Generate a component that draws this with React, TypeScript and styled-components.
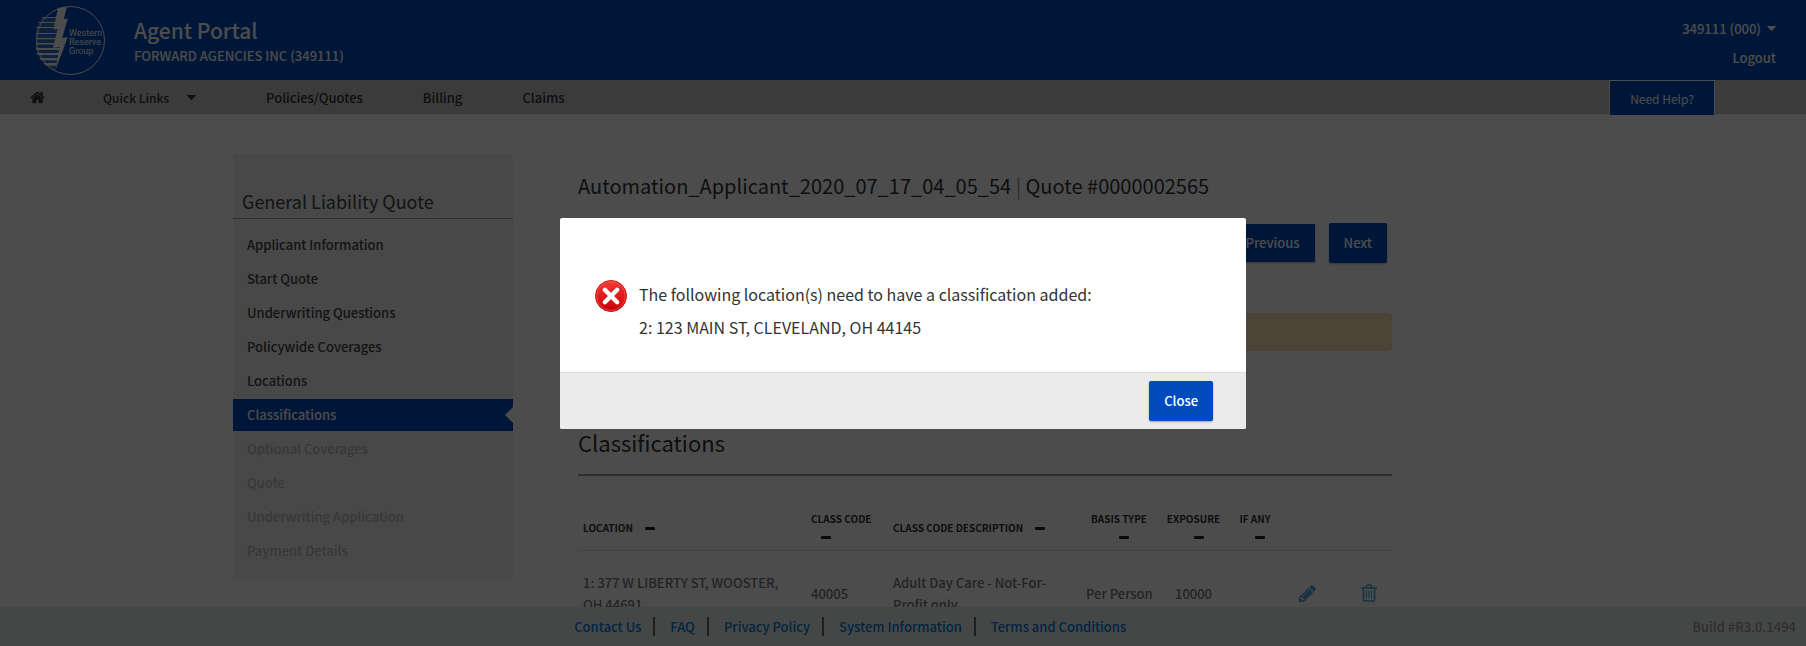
import React from "react";
import styled, { createGlobalStyle } from "styled-components";

const color = {
  brand: "#004bbc",
  text: "#333",
  menu: "#444",
  muted: "#777",
  disabled: "#bbb",
  link: "#0078dc",
  action: "#56a8e0",
};

const GlobalStyle = createGlobalStyle`
  * { box-sizing: border-box; }
  body {
    margin: 0;
    background: #fff;
    color: ${color.text};
    font-family: "Noto Sans CJK SC", "Open Sans", sans-serif;
    font-size: 13px;
    font-weight: 500;
  }
  a { color: inherit; text-decoration: none; }
  button { font: inherit; cursor: pointer; }
  h1, h2, p, ul { margin: 0; padding: 0; }
  ul { list-style: none; }
`;

const Page = styled.div`
  display: flex;
  flex-direction: column;
  height: 100vh;
  overflow: hidden;
`;

/* Header */
const Header = styled.header`
  flex: none;
  display: flex;
  align-items: center;
  height: 80px;
  padding: 0 30px 0 36px;
  background: ${color.brand};
  color: #fff;
`;
const LogoMark = styled.svg`
  display: block;
  width: 69px;
  height: 69px;
  margin-right: 29px;
`;
const Brand = styled.div`
  flex: 1;
  padding-top: 5px;
`;
const BrandName = styled.p`
  font-size: 21px;
  line-height: 26px;
`;
const Agency = styled.p`
  line-height: 25px;
`;
const Account = styled.div`
  display: flex;
  flex-direction: column;
  align-items: flex-end;
  line-height: 29px;
  padding-top: 6px;
`;
const AccountButton = styled.button`
  display: flex;
  align-items: center;
  gap: 6px;
  padding: 0;
  border: 0;
  background: none;
  color: inherit;
  line-height: 29px;
`;

/* Navigation bar */
const NavBar = styled.nav`
  flex: none;
  display: flex;
  align-items: center;
  height: 34px;
  padding-right: 91px;
  background: #c6c6c6;
  color: ${color.text};
`;
const NavLink = styled.a`
  display: flex;
  align-items: center;
  padding: 0 30px;
`;
const HomeLink = styled(NavLink)`
  padding-right: 28px;
`;
const NavMenu = styled.button`
  display: flex;
  align-items: center;
  gap: 18px;
  padding: 0 40px 0 30px;
  border: 0;
  background: none;
  color: inherit;
  font-size: 12px;
`;
const HelpButton = styled.button`
  position: relative;
  align-self: flex-start;
  flex: none;
  height: 36px;
  margin-left: auto;
  padding: 0 20px;
  border: 1px solid #fff;
  background: ${color.brand};
  color: #fff;
  font-size: 12px;
  font-weight: 400;
`;

/* Body */
const Body = styled.div`
  flex: 1;
  min-height: 0;
  overflow: hidden;
  padding: 40px 20px 0;
`;
const Columns = styled.div`
  display: grid;
  grid-template-columns: 280px minmax(0, 814px);
  gap: 65px;
  align-items: start;
  max-width: 1340px;
  margin: 0 auto;
`;
const Sidebar = styled.aside`
  padding: 33px 0 12px;
  background: #f0f0f0;
  color: ${color.menu};
`;
const SidebarTitle = styled.h2`
  margin-bottom: 10px;
  padding: 0 9px 3px;
  border-bottom: 1px solid #999;
  font-size: 18px;
  font-weight: 400;
  line-height: 28px;
`;
const Step = styled.li`
  & + & { margin-top: 2px; }
`;
const StepLink = styled.a<{ $state?: "active" | "disabled" }>`
  position: relative;
  display: block;
  padding: 0 14px;
  line-height: 32px;
  background: ${(p) => (p.$state === "active" ? color.brand : "transparent")};
  color: ${(p) =>
    p.$state === "active" ? "#fff" : p.$state === "disabled" ? color.disabled : "inherit"};

  &::after {
    content: "";
    display: ${(p) => (p.$state === "active" ? "block" : "none")};
    position: absolute;
    top: 8px;
    right: 0;
    border: 8px solid transparent;
    border-left: 0;
    border-right-color: #fff;
  }
`;

const Main = styled.main`
  padding-top: 17px;
`;
const QuoteTitle = styled.h1`
  font-size: 20px;
  font-weight: 400;
  line-height: 30px;
`;
const Divider = styled.span`
  color: #999;
`;
const Actions = styled.div`
  display: flex;
  justify-content: flex-end;
  align-items: center;
  gap: 14px;
  margin-top: 22px;
  padding-right: 5px;
`;
const Button = styled.button<{ $flat?: boolean }>`
  height: ${(p) => (p.$flat ? 38 : 40)}px;
  padding: 0 15px 2px;
  border: 0;
  border-radius: ${(p) => (p.$flat ? 0 : 2)}px;
  background: ${color.brand};
  color: #fff;
  font-weight: 500;
  box-shadow: 0 1px 2px rgba(0, 0, 0, 0.3);
`;
const Notice = styled.div`
  height: 38px;
  margin-top: 50px;
  border: 1px solid #fbe0a0;
  border-radius: 4px;
  background: #fde5b6;
`;
const SectionTitle = styled.h2`
  margin: 76px 0 30px;
  padding-bottom: 17px;
  border-bottom: 2px solid #999;
  font-size: 22px;
  font-weight: 400;
  line-height: 30px;
`;
const Table = styled.table`
  width: 100%;
  table-layout: fixed;
  border-collapse: collapse;
`;
const Col = styled.col<{ $w?: number }>`
  width: ${(p) => (p.$w ? `${p.$w}px` : "auto")};
`;
const Th = styled.th<{ $center?: boolean }>`
  padding: 4px 5px 6px;
  border-bottom: 1px solid #e2e2e2;
  font-size: 10px;
  font-weight: 700;
  line-height: 17px;
  text-align: ${(p) => (p.$center ? "center" : "left")};
`;
const SortMark = styled.span`
  display: inline-block;
  width: 10px;
  height: 3px;
  margin-left: 10px;
  border-radius: 1px;
  background: #222;
  vertical-align: middle;
`;
const Td = styled.td<{ $center?: boolean }>`
  padding: 21px 5px;
  color: ${color.muted};
  line-height: 22px;
  text-align: ${(p) => (p.$center ? "center" : "left")};
  white-space: ${(p) => (p.$center ? "nowrap" : "normal")};

  &:first-child { padding-right: 15px; }
`;
const IconButton = styled.button<{ $end?: boolean }>`
  display: block;
  margin: 0 ${(p) => (p.$end ? "10px" : "auto")} 0 auto;
  padding: 0 0 2px;
  border: 0;
  background: none;
  color: ${color.action};

  svg { display: block; }
`;

/* Footer */
const Footer = styled.footer`
  flex: none;
  display: flex;
  align-items: center;
  height: 39px;
  padding-right: 10px;
  background: #e7efeb;
`;
const FooterLinks = styled.ul`
  flex: 1;
  display: flex;
  justify-content: center;
  padding-left: 8px;
  color: ${color.link};
`;
const FooterItem = styled.li`
  line-height: 19px;

  & + & {
    margin-left: 12px;
    padding-left: 15px;
    border-left: 2px solid #666;
  }
`;
const Build = styled.span`
  color: #999;
`;

/* Dialog */
const Backdrop = styled.div`
  position: fixed;
  inset: 0;
  display: flex;
  align-items: center;
  justify-content: center;
  padding-top: 1px;
  background: rgba(0, 0, 0, 0.7);
`;
const Dialog = styled.div`
  width: 686px;
  max-width: 92%;
  border-radius: 2px;
  overflow: hidden;
  background: #fff;
`;
const DialogBody = styled.div`
  display: flex;
  gap: 12px;
  padding: 60px 35px 28px;
  font-size: 16px;
  font-weight: 400;
  line-height: 33px;
`;
const DialogFooter = styled.div`
  display: flex;
  justify-content: flex-end;
  padding: 8px 33px;
  border-top: 1px solid #dcdcdc;
  background: #ebebeb;
`;

const stripes = [
  [11, 1], [16, 1], [21, 1], [27, 1], [32, 1.3], [37, 1.5], [42, 1.9], [47, 2], [52, 2.4], [57, 2.6],
];

function Logo() {
  return (
    <LogoMark viewBox="0 0 69 69" role="img" aria-label="Western Reserve Group">
      <defs>
        <clipPath id="stripe-area">
          <path d="M22 1 A34 34 0 0 0 19 65 L25 40 L19 40 L25 24 L19 22 Z" />
        </clipPath>
      </defs>
      <g clipPath="url(#stripe-area)">
        <rect y="12" width="30" height="56" fill="#fff" opacity="0.18" />
        {stripes.map(([y, h]) => (
          <rect key={y} y={y} width="30" height={h} fill="#fff" />
        ))}
      </g>
      <path
        d="M22 2 L31 1 L27.8 13 L31.8 12.5 L26.2 32 L31.8 31 L19.5 64 L23.5 41 L17 42 L21.6 23 L17.5 23.5 Z"
        fill="#fff"
      />
      <circle cx="34.5" cy="34.5" r="34" fill="none" stroke="#fff" strokeWidth="1" />
      <g fill="#fff" fontFamily="Roboto, sans-serif" fontSize="9" fontWeight="400">
        <text x="33" y="30">Western</text>
        <text x="33" y="39">Reserve</text>
        <text x="33" y="48">Group</text>
      </g>
    </LogoMark>
  );
}

function HomeIcon() {
  return (
    <svg width="15" height="13" viewBox="0 253 1664 1283" fill="currentColor" aria-hidden="true">
      <path d="M1408 992v480q0 26-19 45t-45 19H960v-384H704v384H320q-26 0-45-19t-19-45V992q0-1 .5-3t.5-3l575-474 575 474q1 2 1 6zm223-69l-62 74q-8 9-21 11h-3q-13 0-21-7L832 424 140 1001q-12 8-24 7-13-2-21-11l-62-74q-8-10-7-23.5T37 878L756 279q32-26 76-26t76 26l244 204V288q0-14 9-23t23-9h192q14 0 23 9t9 23v408l219 182q10 8 11 21.5t-7 23.5z" />
    </svg>
  );
}

function CaretIcon() {
  return (
    <svg width="9" height="5" viewBox="0 0 9 5" fill="currentColor" aria-hidden="true">
      <path d="M0.5 0 H8.5 Q9 0.3 8.7 0.8 L5 4.7 Q4.5 5.1 4 4.7 L0.3 0.8 Q0 0.3 0.5 0 Z" />
    </svg>
  );
}

function PencilIcon() {
  return (
    <svg width="17" height="17" viewBox="0 149 1515 1515" fill="currentColor" aria-hidden="true">
      <path d="M363 1536l91-91-235-235-91 91v107h128v128h107zM886 608q0-22-22-22-10 0-17 7l-542 542q-7 7-7 17 0 22 22 22 10 0 17-7l542-542q7-7 7-17zM832 416l416 416-832 832H0v-416zM1515 512q0 53-37 90l-166 166-416-416 166-165q36-38 90-38 53 0 91 38l235 234q37 39 37 91z" />
    </svg>
  );
}

function TrashIcon() {
  return (
    <svg width="16" height="18" viewBox="0 0 16 18" fill="none" stroke="currentColor" aria-hidden="true">
      <path d="M0 4 H16" strokeWidth="1.6" />
      <path d="M5 3.6 L5.6 1.6 Q5.8 0.9 6.6 0.9 H9.4 Q10.2 0.9 10.4 1.6 L11 3.6" strokeWidth="1.5" />
      <path d="M2.4 4 V15.6 Q2.4 17 3.8 17 H12.2 Q13.6 17 13.6 15.6 V4" strokeWidth="1.7" />
      <path d="M5.5 6.8 V14.2 M8 6.8 V14.2 M10.5 6.8 V14.2" strokeWidth="1.1" />
    </svg>
  );
}

function ErrorIcon() {
  return (
    <svg width="32" height="34" viewBox="0 0 32 34" aria-hidden="true">
      <defs>
        <linearGradient id="error-fill" x1="0" y1="0" x2="0" y2="1">
          <stop offset="0" stopColor="#f83a3a" />
          <stop offset="0.5" stopColor="#e21a1e" />
          <stop offset="1" stopColor="#c40004" />
        </linearGradient>
      </defs>
      <circle cx="16" cy="18" r="15.5" fill="url(#error-fill)" stroke="#c8140f" />
      <circle cx="16" cy="18" r="14.4" fill="none" stroke="#f4705f" strokeWidth="0.6" />
      <path d="M9.8 11.8 L22.2 24.2 M22.2 11.8 L9.8 24.2" stroke="#fff" strokeWidth="4.4" strokeLinecap="round" />
    </svg>
  );
}

const steps: { label: string; state?: "active" | "disabled" }[] = [
  { label: "Applicant Information" },
  { label: "Start Quote" },
  { label: "Underwriting Questions" },
  { label: "Policywide Coverages" },
  { label: "Locations" },
  { label: "Classifications", state: "active" },
  { label: "Optional Coverages", state: "disabled" },
  { label: "Quote", state: "disabled" },
  { label: "Underwriting Application", state: "disabled" },
  { label: "Payment Details", state: "disabled" },
];

const columns = [
  { label: "LOCATION", width: 228 },
  { label: "CLASS CODE", width: 82 },
  { label: "CLASS CODE DESCRIPTION" },
  { label: "BASIS TYPE", width: 76, center: true },
  { label: "EXPOSURE", width: 73, center: true },
  { label: "IF ANY", width: 50, center: true },
];

const footerLinks = ["Contact Us", "FAQ", "Privacy Policy", "System Information", "Terms and Conditions"];

export default function App() {
  return (
    <>
      <GlobalStyle />
      <Page>
        <Header>
          <Logo />
          <Brand>
            <BrandName>Agent Portal</BrandName>
            <Agency>FORWARD AGENCIES INC (349111)</Agency>
          </Brand>
          <Account>
            <AccountButton type="button">
              349111 (000) <CaretIcon />
            </AccountButton>
            <a href="#logout">Logout</a>
          </Account>
        </Header>

        <NavBar aria-label="Main">
          <HomeLink href="#home" aria-label="Home">
            <HomeIcon />
          </HomeLink>
          <NavMenu type="button">
            Quick Links <CaretIcon />
          </NavMenu>
          <NavLink href="#policies">Policies/Quotes</NavLink>
          <NavLink href="#billing">Billing</NavLink>
          <NavLink href="#claims">Claims</NavLink>
          <HelpButton type="button">Need Help?</HelpButton>
        </NavBar>

        <Body>
          <Columns>
            <Sidebar>
              <SidebarTitle>General Liability Quote</SidebarTitle>
              <ul>
                {steps.map(({ label, state }) => (
                  <Step key={label}>
                    <StepLink
                      href="#step"
                      $state={state}
                      aria-current={state === "active" ? "step" : undefined}
                      aria-disabled={state === "disabled" || undefined}
                    >
                      {label}
                    </StepLink>
                  </Step>
                ))}
              </ul>
            </Sidebar>

            <Main>
              <QuoteTitle>
                Automation_Applicant_2020_07_17_04_05_54 <Divider>|</Divider> Quote #0000002565
              </QuoteTitle>
              <Actions>
                <Button type="button" $flat>Previous</Button>
                <Button type="button">Next</Button>
              </Actions>
              <Notice />
              <SectionTitle>Classifications</SectionTitle>
              <Table>
                <colgroup>
                  {columns.map((c) => (
                    <Col key={c.label} $w={c.width} />
                  ))}
                  <Col $w={54} />
                  <Col $w={58} />
                </colgroup>
                <thead>
                  <tr>
                    {columns.map((c) => (
                      <Th key={c.label} scope="col" $center={c.center}>
                        {c.label} <SortMark />
                      </Th>
                    ))}
                    <Th as="td" />
                    <Th as="td" />
                  </tr>
                </thead>
                <tbody>
                  <tr>
                    <Td>1: 377 W LIBERTY ST, WOOSTER, OH 44691</Td>
                    <Td>40005</Td>
                    <Td>Adult Day Care - Not-For-Profit only</Td>
                    <Td $center>Per Person</Td>
                    <Td $center>10000</Td>
                    <Td />
                    <Td>
                      <IconButton type="button" aria-label="Edit">
                        <PencilIcon />
                      </IconButton>
                    </Td>
                    <Td>
                      <IconButton type="button" aria-label="Delete" $end>
                        <TrashIcon />
                      </IconButton>
                    </Td>
                  </tr>
                </tbody>
              </Table>
            </Main>
          </Columns>
        </Body>

        <Footer>
          <FooterLinks>
            {footerLinks.map((label) => (
              <FooterItem key={label}>
                <a href="#info">{label}</a>
              </FooterItem>
            ))}
          </FooterLinks>
          <Build>Build #R3.0.1494</Build>
        </Footer>
      </Page>

      <Backdrop>
        <Dialog role="alertdialog" aria-modal="true" aria-describedby="dialog-message">
          <DialogBody>
            <ErrorIcon />
            <div id="dialog-message">
              <p>The following location(s) need to have a classification added:</p>
              <p>2: 123 MAIN ST, CLEVELAND, OH 44145</p>
            </div>
          </DialogBody>
          <DialogFooter>
            <Button type="button">Close</Button>
          </DialogFooter>
        </Dialog>
      </Backdrop>
    </>
  );
}
